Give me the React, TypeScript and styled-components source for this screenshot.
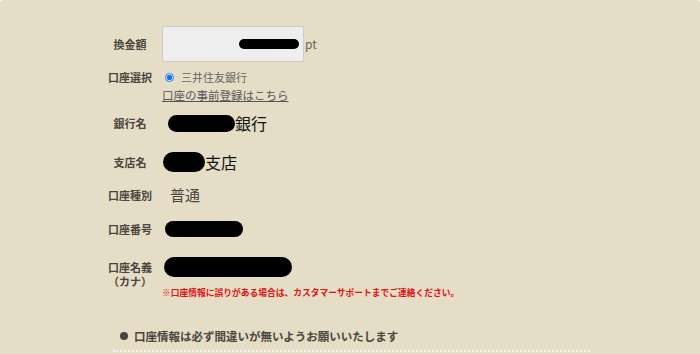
import styled, { createGlobalStyle } from "styled-components";

const Global = createGlobalStyle`
  html, body {
    margin: 0;
    padding: 0;
    background: #fff;
  }
  body {
    font-family: "Noto Sans CJK JP", "Noto Sans", sans-serif;
  }
`;

const Page = styled.div`
  width: 700px;
  height: 354px;
  background: #e5ddc6;
  border-radius: 3px 3px 0 0;
  overflow: hidden;
  padding-top: 26px;
  box-sizing: border-box;
`;

const Form = styled.div`
  padding-left: 100px;
`;

const Row = styled.div<{ $top: number; $h: number; $align?: string }>`
  display: flex;
  align-items: ${(p) => p.$align || "center"};
  margin-top: ${(p) => p.$top}px;
  height: ${(p) => p.$h}px;
`;

const Label = styled.div<{ $pad?: number }>`
  width: 60px;
  text-align: center;
  font-size: 11px;
  line-height: 14px;
  font-weight: 700;
  color: #4b453d;
  padding-top: ${(p) => p.$pad || 0}px;
  margin-right: 2px;
  flex-shrink: 0;
`;

const Value = styled.div`
  display: flex;
  align-items: center;
`;

const AmountBox = styled.div`
  width: 142px;
  height: 36px;
  background: #eeeeee;
  border: 1px solid #cfcbc2;
  border-radius: 2px;
  display: flex;
  align-items: center;
  justify-content: flex-end;
  padding-right: 4px;
  box-sizing: border-box;
`;

const Unit = styled.span`
  font-size: 12px;
  color: #666;
  margin-left: 1px;
  margin-top: -2px;
`;

const Redact = styled.span<{ $w: number; $h: number; $ml?: number }>`
  display: inline-block;
  width: ${(p) => p.$w}px;
  height: ${(p) => p.$h}px;
  background: #000;
  border-radius: ${(p) => p.$h / 2}px;
  margin-left: ${(p) => p.$ml || 0}px;
`;

const Stack = styled.div`
  display: flex;
  flex-direction: column;
`;

const RadioLine = styled.label`
  display: flex;
  align-items: center;
  height: 14px;
  font-size: 11px;
  color: #666;
  padding-left: 3px;
`;

const Radio = styled.input`
  width: 9px;
  height: 9px;
  margin: 0 7px 0 0;
  accent-color: #1a73e8;
`;

const RegLink = styled.a`
  display: block;
  margin-top: 4px;
  font-size: 11.5px;
  line-height: 14px;
  color: #555;
  text-decoration: underline;
`;

const BigText = styled.span<{ $c?: string; $size?: number; $ml?: number }>`
  font-size: ${(p) => p.$size || 16}px;
  color: ${(p) => p.$c || "#111"};
  margin-left: ${(p) => p.$ml || 0}px;
  line-height: 20px;
`;

const Note = styled.div`
  margin-top: 2px;
  padding-left: 162px;
  font-size: 8.75px;
  line-height: 12px;
  font-weight: 700;
  color: #e01010;
`;

const Bullet = styled.div`
  margin-top: 30px;
  padding-left: 120px;
  font-size: 11.5px;
  line-height: 14px;
  font-weight: 700;
  color: #4a4540;
  display: flex;
  align-items: center;
  &::before {
    content: "";
    width: 8px;
    height: 8px;
    border-radius: 50%;
    background: #4a4540;
    margin-right: 6px;
  }
`;

const Dots = styled.div`
  margin: 7px 0 0 113px;
  width: 477px;
  border-top: 2px dotted #f8f4ec;
`;

export default function App() {
  return (
    <Page>
      <Global />
      <Form>
        <Row $top={0} $h={36}>
          <Label>換金額</Label>
          <Value>
            <AmountBox>
              <Redact $w={60} $h={10} />
            </AmountBox>
            <Unit>pt</Unit>
          </Value>
        </Row>
        <Row $top={8} $h={34} $align="flex-start">
          <Label>口座選択</Label>
          <Stack>
            <RadioLine>
              <Radio type="radio" name="bank" defaultChecked />
              三井住友銀行
            </RadioLine>
            <RegLink href="#">口座の事前登録はこちら</RegLink>
          </Stack>
        </Row>
        <Row $top={7} $h={24}>
          <Label>銀行名</Label>
          <Value>
            <Redact $w={67} $h={17} $ml={6} />
            <BigText>銀行</BigText>
          </Value>
        </Row>
        <Row $top={15} $h={24}>
          <Label>支店名</Label>
          <Value>
            <Redact $w={42} $h={20} $ml={1} />
            <BigText>支店</BigText>
          </Value>
        </Row>
        <Row $top={9} $h={24}>
          <Label>口座種別</Label>
          <Value>
            <BigText $c="#4a4540" $size={15} $ml={8}>
              普通
            </BigText>
          </Value>
        </Row>
        <Row $top={10} $h={24}>
          <Label>口座番号</Label>
          <Value>
            <Redact $w={78} $h={16} $ml={3} />
          </Value>
        </Row>
        <Row $top={16} $h={28} $align="flex-start">
          <Label $pad={3}>
            口座名義
            <br />
            （カナ）
          </Label>
          <Value>
            <Redact $w={128} $h={20} $ml={2} />
          </Value>
        </Row>
      </Form>
      <Note>※口座情報に誤りがある場合は、カスタマーサポートまでご連絡ください。</Note>
      <Bullet>口座情報は必ず間違いが無いようお願いいたします</Bullet>
      <Dots />
    </Page>
  );
}
